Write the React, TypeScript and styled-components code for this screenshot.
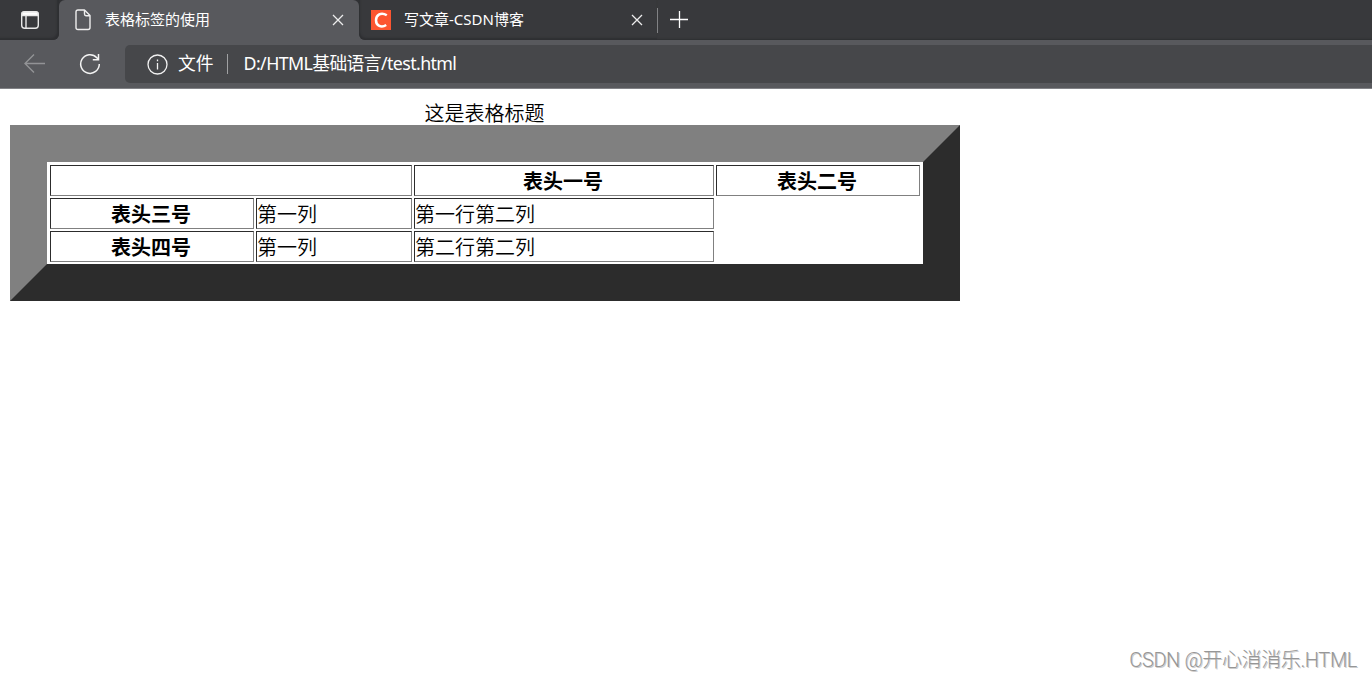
import React from 'react';
import styled, { createGlobalStyle } from 'styled-components';

const GlobalStyle = createGlobalStyle`
  * { box-sizing: border-box; }
  body { margin: 0; background: #fff; overflow: hidden; }
`;

const Window = styled.div`
  display: flex;
  flex-direction: column;
  height: 679px;
  font-family: 'Noto Sans', 'Noto Sans CJK SC', sans-serif;
`;

const TabStrip = styled.div`
  display: flex;
  height: 40px;
  background: #58595d;
`;

const Tab = styled.div<{ $active?: boolean; $width: number }>`
  display: flex;
  align-items: center;
  width: ${p => p.$width}px;
  height: 40px;
  color: #fff;
  font-size: 15px;
  white-space: nowrap;
  background: ${p => (p.$active ? '#58595d' : '#38393c')};
  border-radius: ${p => (p.$active ? '6px 6px 0 0' : '0 0 0 6px')};
  padding: 0 ${p => (p.$active ? 15 : 14)}px 0 ${p => (p.$active ? 16 : 12)}px;
  box-shadow: ${p => (p.$active ? 'none' : 'inset 1px -2px 2px #2e2f32')};
`;

const ActiveTabBacking = styled.div`
  background: #303134;
`;

const StripLead = styled.div`
  display: flex;
  align-items: center;
  width: 59px;
  padding-left: 20px;
  background: #38393c;
  border-radius: 0 0 6px 0;
  box-shadow: inset -2px -2px 2px #2e2f32;
`;

const TabTitle = styled.span<{ $gap: number }>`
  flex: 1;
  margin-left: ${p => p.$gap}px;
  padding-bottom: 2px;
  line-height: 20px;
`;

const StripTail = styled.div`
  display: flex;
  flex: 1;
  align-items: center;
  background: #38393c;
  box-shadow: inset 0 -2px 2px -1px #2e2f32;
`;

const TabDivider = styled.div`
  width: 1px;
  height: 25px;
  margin-right: 12px;
  background: #818285;
`;

const Favicon = styled.svg`
  display: block;
  background: #fc5531;
`;

const Toolbar = styled.div`
  display: flex;
  align-items: flex-start;
  height: 49px;
  padding: 5px 0 0 23px;
  background: #58595d;
  border-bottom: 1px solid #818286;
`;

const NavButton = styled.div<{ $width: number }>`
  display: flex;
  align-items: center;
  width: ${p => p.$width}px;
  height: 38px;
`;

const AddressBar = styled.div`
  display: flex;
  flex: 1;
  align-items: center;
  height: 38px;
  padding-left: 22px;
  color: #fff;
  font-size: 17.8px;
  line-height: 24px;
  white-space: nowrap;
  background: #46474a;
  border-radius: 5px 0 0 5px;
`;

const Scheme = styled.span`
  margin-left: 10px;
  padding-bottom: 2px;
`;

const AddressDivider = styled.span`
  width: 1px;
  height: 20px;
  margin: 0 16px 0 13px;
  background: #a0a1a3;
`;

const Url = styled.span`
  padding-bottom: 2px;
  letter-spacing: -0.6px;
`;

const Page = styled.main`
  display: flex;
  flex: 1;
  flex-direction: column;
  justify-content: space-between;
  padding: 10px;
  color: #000;
`;

const Table = styled.table`
  width: 950px;
  table-layout: fixed;
  border-collapse: separate;
  border-spacing: 2px;
  border: 37px solid;
  border-color: #808080 #2c2c2c #2c2c2c #808080;
  padding: 1px 1px 0;
  font-size: 20px;
  font-weight: 350;
  line-height: 26px;
`;

const Caption = styled.caption`
  height: 26px;
  padding-right: 1px;
  line-height: 30px;
  max-height: 26px;
`;

const Cell = styled.td`
  height: 31px;
  padding: 2px 2px 0 0;
  border: 1px solid;
  border-color: #2c2c2c #808080 #808080 #2c2c2c;
  white-space: nowrap;
`;

const HeadCell = styled(Cell).attrs({ as: 'th' })`
  font-weight: 700;
  text-align: center;
`;

const Watermark = styled.footer`
  align-self: flex-end;
  margin-right: 5px;
  margin-bottom: -5px;
  color: #969696;
  font-family: Roboto, 'Noto Sans CJK SC', sans-serif;
  font-size: 20px;
  font-weight: 300;
  line-height: 28px;
  letter-spacing: -0.38px;
  white-space: nowrap;
  text-shadow: 1px 1px 0 #ccc;
`;

const CloseIcon = () => (
  <svg width="12" height="12" viewBox="0 0 12 12" stroke="#ededed" strokeWidth="1.3" fill="none">
    <path d="M1 1 11 11M11 1 1 11" />
  </svg>
);

const App = () => (
  <Window>
    <GlobalStyle />
    <TabStrip>
      <StripLead>
        <svg width="20" height="20" viewBox="0 0 20 20" fill="none" stroke="#e8e8e8" strokeWidth="1.4">
          <rect x="1.7" y="1.7" width="16.6" height="16.6" rx="3" />
          <path d="M2 3.5Q2 2 4 2H16Q18 2 18 3.5V5.5H2Z" fill="#fff" />
          <path d="M6 6V18" />
        </svg>
      </StripLead>
      <ActiveTabBacking>
        <Tab $active $width={300}>
          <svg width="16" height="22" viewBox="0 0 16 22" fill="none" stroke="#eee" strokeWidth="1.4" strokeLinejoin="round">
            <path d="M3 1H9.5L15 6.5V18.5Q15 20.5 13 20.5H3Q1 20.5 1 18.5V3Q1 1 3 1Z" />
            <path d="M9.5 1V5Q9.5 6.7 11 6.7H15" />
          </svg>
          <TabTitle $gap={14}>表格标签的使用</TabTitle>
          <CloseIcon />
        </Tab>
      </ActiveTabBacking>
      <Tab $width={298}>
        <Favicon width="20" height="20" viewBox="0 0 20 20" fill="none" stroke="#fff" strokeWidth="2.5">
          <path d="M15.8 5.3C10 1.5 5 5 5 10.3C5 16 10.5 18 15.2 15" />
        </Favicon>
        <TabTitle $gap={13}>写文章-CSDN博客</TabTitle>
        <CloseIcon />
      </Tab>
      <StripTail>
        <TabDivider />
        <svg width="18" height="18" viewBox="0 0 18 18" stroke="#fff" strokeWidth="1.3">
          <path d="M0 8.5H18M9.5 0V17" />
        </svg>
      </StripTail>
    </TabStrip>
    <Toolbar>
      <NavButton $width={56}>
        <svg width="22" height="20" viewBox="0 0 22 20" fill="none" stroke="#929396" strokeWidth="1.4">
          <path d="M22 9.5H2M11 0.5 2 9.5 11 18.5" />
        </svg>
      </NavButton>
      <NavButton $width={46}>
        <svg width="22" height="22" viewBox="0 0 22 22" fill="none" stroke="#f4f4f4" strokeWidth="1.5">
          <path d="M20.3 11A9.3 9.3 0 1 1 17.8 4.7L19.5 6.5M19.5 1V6.7H13.8" />
        </svg>
      </NavButton>
      <AddressBar>
        <svg width="21" height="21" viewBox="0 0 21 21" fill="none" stroke="#f2f2f2" strokeWidth="1.3">
          <circle cx="10.5" cy="10.5" r="9.5" />
          <path d="M10.5 9V15.5M10.5 5.5V7.2" />
        </svg>
        <Scheme>文件</Scheme>
        <AddressDivider />
        <Url>D:/HTML基础语言/test.html</Url>
      </AddressBar>
    </Toolbar>
    <Page>
      <Table>
        <Caption>这是表格标题</Caption>
        <colgroup>
          <col width="204" />
          <col width="156" />
          <col width="300" />
          <col width="204" />
        </colgroup>
        <tbody>
          <tr>
            <Cell colSpan={2} />
            <HeadCell>表头一号</HeadCell>
            <HeadCell>表头二号</HeadCell>
          </tr>
          <tr>
            <HeadCell>表头三号</HeadCell>
            <Cell>第一列</Cell>
            <Cell>第一行第二列</Cell>
          </tr>
          <tr>
            <HeadCell>表头四号</HeadCell>
            <Cell>第一列</Cell>
            <Cell>第二行第二列</Cell>
          </tr>
        </tbody>
      </Table>
      <Watermark>CSDN @开心消消乐.HTML</Watermark>
    </Page>
  </Window>
);

export default App;
